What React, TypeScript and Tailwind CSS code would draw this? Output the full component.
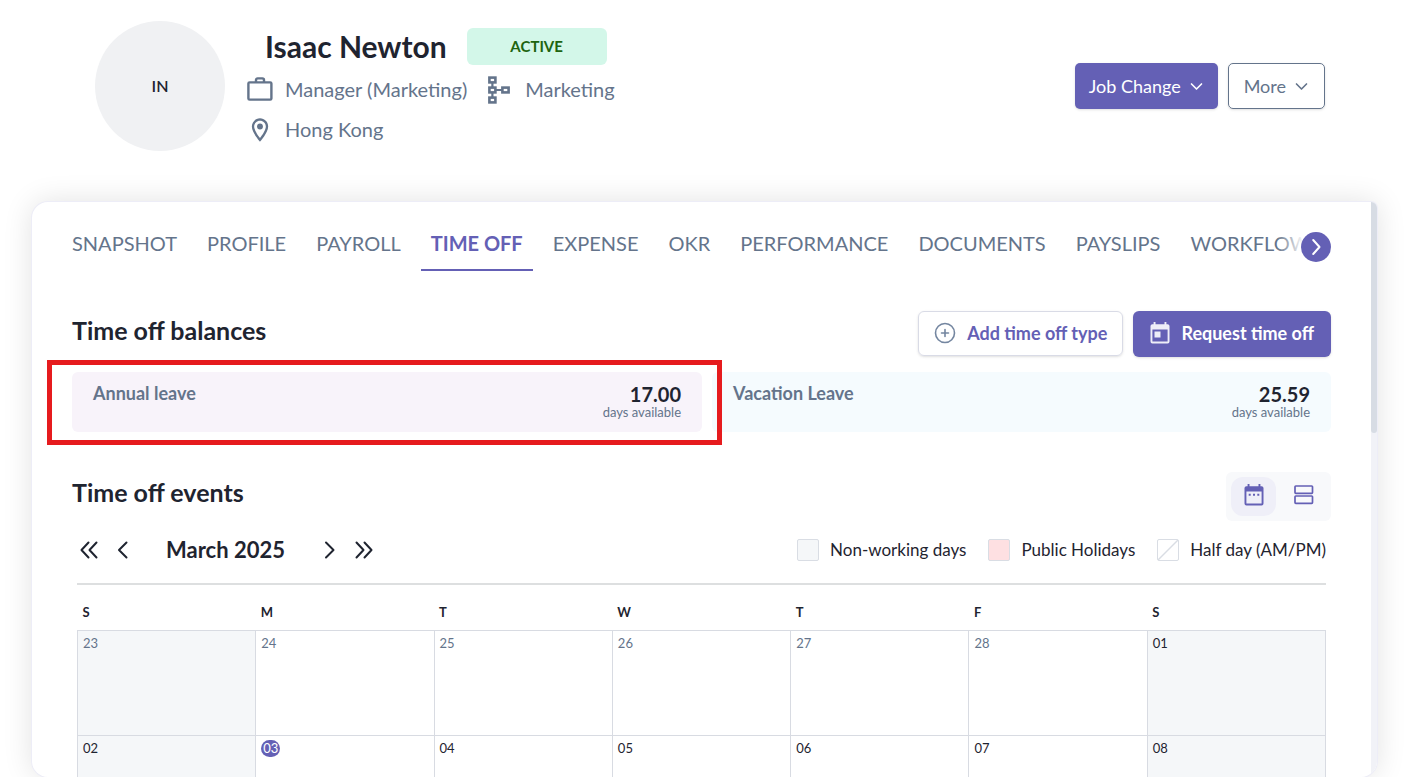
import type { ReactNode } from "react";
import { MdOutlineLocationOn } from "react-icons/md";

const tabs = [
  "SNAPSHOT",
  "PROFILE",
  "PAYROLL",
  "TIME OFF",
  "EXPENSE",
  "OKR",
  "PERFORMANCE",
  "DOCUMENTS",
  "PAYSLIPS",
  "WORKFLOWS",
];

const weekdays = ["S", "M", "T", "W", "T", "F", "S"];

const weeks = [
  ["23", "24", "25", "26", "27", "28", "01"],
  ["02", "03", "04", "05", "06", "07", "08"],
];

function Chevron({ d, className }: { d: string; className: string }) {
  return (
    <svg
      viewBox="0 0 18 18"
      className={className}
      fill="none"
      stroke="currentColor"
      strokeWidth="2"
      strokeLinecap="round"
      strokeLinejoin="round"
      aria-hidden="true"
    >
      <path d={d} />
    </svg>
  );
}

function BriefcaseIcon() {
  return (
    <svg viewBox="0 0 28 28" className="size-7" fill="none" stroke="currentColor" strokeWidth="2.4" aria-hidden="true">
      <rect x="2.4" y="6.4" width="23" height="17.2" rx="1.2" />
      <path d="M10 6.400V4a1.600 1.600 0 0 1 1.600-1.600h4.800A1.600 1.600 0 0 1 18 4v2.400" />
    </svg>
  );
}

function HierarchyIcon() {
  return (
    <svg viewBox="0 0 24 28" className="h-7 w-6" fill="none" stroke="currentColor" strokeWidth="2.6" aria-hidden="true">
      <rect x="2.4" y="1.6" width="6" height="4.8" />
      <rect x="2.4" y="11.6" width="6" height="4.8" />
      <rect x="2.4" y="21.6" width="6" height="4.8" />
      <rect x="15.400" y="11.6" width="6.200" height="4.8" />
      <path d="M5.400 6.400v5.200M5.400 16.400v5.200M8.400 14h7" strokeWidth="2.200" />
    </svg>
  );
}

function AgendaIcon() {
  return (
    <svg viewBox="0 0 20 20" className="size-5" fill="none" stroke="currentColor" strokeWidth="1.7" aria-hidden="true">
      <rect x="1" y="1" width="17.500" height="7.400" rx="0.8" />
      <rect x="1" y="11" width="17.500" height="7.400" rx="0.8" />
    </svg>
  );
}

function CalendarIcon({ variant, className }: { variant: "event" | "month"; className: string }) {
  return (
    <svg viewBox="0 0 20 22" className={className} fill="currentColor" aria-hidden="true">
      <path
        fillRule="evenodd"
        d="M3.600 0h1.900v2.200h9V0h1.900v2.200h1.200A1.900 1.900 0 0 1 19.500 4v15.600a1.900 1.900 0 0 1-1.900 1.900H2.400A1.900 1.900 0 0 1 .5 19.600V4a1.900 1.900 0 0 1 1.900-1.800h1.200zM2.400 7.400v12.200h15.200V7.400z"
      />
      {variant === "event" ? (
        <rect x="4.500" y="9.500" width="6" height="6" />
      ) : (
        <path d="M4.700 9.800h2v2h-2zM9 9.800h2v2H9zM13.300 9.800h2v2h-2z" />
      )}
    </svg>
  );
}

function BalanceCard({ name, days, className, children }: { name: string; days: string; className: string; children?: ReactNode }) {
  return (
    <div className={`relative flex h-15 items-start justify-between rounded-md px-[21px] pt-2.5 ${className}`}>
      <span className="text-lg leading-[22px] font-bold text-[#64748b]">{name}</span>
      <div className="flex flex-col items-end pt-0.5">
        <span className="text-xl leading-5 font-bold text-[#1f2430]">{days}</span>
        <span className="text-[13px] leading-4 text-[#64748b]">days available</span>
      </div>
      {children}
    </div>
  );
}

function Legend({ label, swatch, children }: { label: string; swatch: string; children?: ReactNode }) {
  return (
    <li className="flex items-center gap-[11px]">
      <span className={`size-[22px] rounded-xs border border-[#d9dde4] ${swatch}`}>{children}</span>
      {label}
    </li>
  );
}

export default function App() {
  return (
    <div className="flex h-screen flex-col overflow-hidden bg-white font-[Lato,sans-serif] text-[#1f2430]">
      <header className="flex items-center justify-between pt-[21px] pr-[87px] pb-[51px] pl-[95px]">
        <div className="flex items-center gap-[21px]">
          <div className="flex size-[130px] items-center justify-center rounded-full bg-[#f0f1f3] text-base font-semibold">
            IN
          </div>
          <div className="flex flex-col">
            <div className="mb-[11px] flex items-start gap-5 pl-[19px]">
              <h1 className="text-3xl leading-9 font-bold">Isaac Newton</h1>
              <span className="flex h-[37px] w-[140px] items-center justify-center rounded-md bg-[#d3f7e9] text-[15px] font-bold text-[#20640f]">
                ACTIVE
              </span>
            </div>
            <div className="mb-3 flex items-start text-xl leading-[26px] text-[#64748b]">
              <BriefcaseIcon />
              <span className="mr-5 ml-[11px]">Manager (Marketing)</span>
              <HierarchyIcon />
              <span className="ml-[14px]">Marketing</span>
            </div>
            <div className="flex items-start gap-[11px] text-xl leading-[26px] text-[#64748b]">
              <MdOutlineLocationOn className="size-7" />
              <span>Hong Kong</span>
            </div>
          </div>
        </div>
        <div className="flex gap-2.5 text-lg">
          <button className="flex h-[46px] items-center gap-2 rounded-[5px] bg-[#6460b5] px-[14px] text-white shadow-sm">
            Job Change
            <Chevron d="M3 6 9 12l6-6" className="size-[15px]" />
          </button>
          <button className="flex h-[46px] items-center gap-2 rounded-[5px] border border-[#64748b] px-[15px] text-[#64748b] shadow-sm">
            More
            <Chevron d="M3 6 9 12l6-6" className="size-[15px]" />
          </button>
        </div>
      </header>

      <main className="mr-[35px] ml-8 flex min-h-0 flex-1 overflow-hidden rounded-2xl rounded-tr-md bg-white shadow-[0_0_30px_rgba(0,0,0,0.12)] ring-1 ring-[#ededf7]">
        <div className="min-w-0 flex-1 px-10">
          <nav className="relative -ml-2.5 flex pt-5">
            <div className="flex min-w-0 flex-1 gap-2.5 overflow-hidden pr-8">
              {tabs.map((tab) => (
                <a
                  key={tab}
                  href="#"
                  className={
                    tab === "TIME OFF"
                      ? "h-[49px] shrink-0 border-b-2 border-[#6460b5] px-2.5 pt-[7px] text-xl leading-7 font-bold text-[#6460b5]"
                      : "h-[49px] shrink-0 px-2.5 pt-[7px] text-xl leading-7 text-[#64748b]"
                  }
                >
                  {tab}
                </a>
              ))}
            </div>
            <div className="absolute top-5 right-0 flex h-12 w-[54px] items-start justify-end bg-linear-to-r from-transparent to-white to-50% pt-2.5">
              <button aria-label="Next tabs" className="flex size-[30px] items-center justify-center rounded-full bg-[#6460b5] text-white">
                <Chevron d="M6.200 2 12.500 9l-6.300 7" className="size-[18px]" />
              </button>
            </div>
          </nav>

          <section>
            <div className="mt-10 flex justify-between">
              <h2 className="pt-[3px] text-[25px] leading-8 font-bold">Time off balances</h2>
              <div className="flex gap-2.5 text-lg leading-6 font-bold">
                <button className="flex h-[45px] items-center gap-[11px] rounded-md border border-[#d9dbe6] px-[15px] pb-px text-[#6460b5] shadow-sm">
                  <svg viewBox="0 0 22 22" className="size-[22px] text-[#7486a0]" fill="none" stroke="currentColor" strokeWidth="1.6" strokeLinecap="round" aria-hidden="true">
                    <circle cx="11" cy="11" r="9.500" />
                    <path d="M11 7.500v7M7.500 11h7" />
                  </svg>
                  Add time off type
                </button>
                <button className="flex h-[46px] items-center gap-[11px] rounded-md bg-[#6460b5] px-[17px] pb-0.5 text-white shadow-sm">
                  <CalendarIcon variant="event" className="h-[22px] w-5 text-[#eeeef8]" />
                  Request time off
                </button>
              </div>
            </div>
            <div className="mt-[15px] grid grid-cols-[630fr_619fr] gap-2.5">
              <BalanceCard name="Annual leave" days="17.00" className="z-10 bg-[#f8f3fa]">
                <div className="pointer-events-none absolute -top-3 -right-5 -bottom-[13px] -left-[25px] border-5 border-[#e61b1e]" />
              </BalanceCard>
              <BalanceCard name="Vacation Leave" days="25.59" className="bg-[#f5fbfe]" />
            </div>
          </section>

          <section>
            <div className="mt-10 flex justify-between">
              <h2 className="pt-1 text-[25px] leading-8 font-bold">Time off events</h2>
              <div className="flex h-[49px] gap-[5px] rounded-md bg-[#f8f9fb] p-[5px] text-[#6460b5]">
                <button aria-label="Calendar view" className="flex w-[45px] items-center justify-center rounded-xl bg-[#efeff8] pb-1">
                  <CalendarIcon variant="month" className="h-[22px] w-5" />
                </button>
                <button aria-label="List view" className="flex w-[45px] items-center justify-center pb-1">
                  <AgendaIcon />
                </button>
              </div>
            </div>

            <div className="mx-[5px]">
              <div className="mt-3 flex h-[52px] items-start justify-between border-b-2 border-[#dddfe0]">
                <div className="flex h-[34px] items-center">
                  <button aria-label="Previous year" className="ml-[3px]">
                    <Chevron d="M8.500 1.500 1.500 9l7 7.500M16.500 1.500 9.500 9l7 7.500" className="size-[18px]" />
                  </button>
                  <button aria-label="Previous month" className="ml-4">
                    <Chevron d="M12.500 1.500 5 9l7.500 7.500" className="size-[18px]" />
                  </button>
                  <h3 className="mr-9 ml-[34px] text-[22px] leading-8 font-bold">March 2025</h3>
                  <button aria-label="Next month">
                    <Chevron d="M5 1.500 12.500 9 5 16.500" className="size-[18px]" />
                  </button>
                  <button aria-label="Next year" className="ml-4">
                    <Chevron d="M1.500 1.500l7 7.500-7 7.500M9.500 1.500l7 7.500-7 7.500" className="size-[18px]" />
                  </button>
                </div>
                <ul className="flex h-[34px] items-center gap-[22px] text-[17px]">
                  <Legend label="Non-working days" swatch="bg-[#f5f7f9]" />
                  <Legend label="Public Holidays" swatch="bg-[#fee0e2]" />
                  <Legend label="Half day (AM/PM)" swatch="bg-white">
                    <svg viewBox="0 0 20 20" className="size-5 text-[#d9dde4]" stroke="currentColor" strokeWidth="1.4" aria-hidden="true">
                      <path d="M0 20 20 0" />
                    </svg>
                  </Legend>
                </ul>
              </div>

              <table className="mt-3 w-full table-fixed border-collapse text-[13px] leading-5">
                <thead>
                  <tr>
                    {weekdays.map((day, i) => (
                      <th key={i} className="h-[33px] px-[5px] pb-0.5 text-left font-bold">
                        {day}
                      </th>
                    ))}
                  </tr>
                </thead>
                <tbody>
                  {weeks.map((week, row) => (
                    <tr key={row}>
                      {week.map((date, col) => (
                        <td
                          key={date}
                          className={`h-[105px] border border-[#d8dbe2] px-[5px] pt-0.5 align-top ${col === 0 || col === 6 ? "bg-[#f5f7f9]" : ""} ${row === 0 && col < 6 ? "text-[#64748b]" : ""}`}
                        >
                          {date === "03" ? (
                            <span className="inline-block rounded-full bg-[#6460b5] px-0.5 leading-[17px] text-white">{date}</span>
                          ) : (
                            date
                          )}
                        </td>
                      ))}
                    </tr>
                  ))}
                </tbody>
              </table>
            </div>
          </section>
        </div>
        <div className="w-1.5 shrink-0 bg-[#f1f2f7]">
          <div className="h-[231px] rounded-b-full bg-[#d7dce4]" />
        </div>
      </main>
    </div>
  );
}
